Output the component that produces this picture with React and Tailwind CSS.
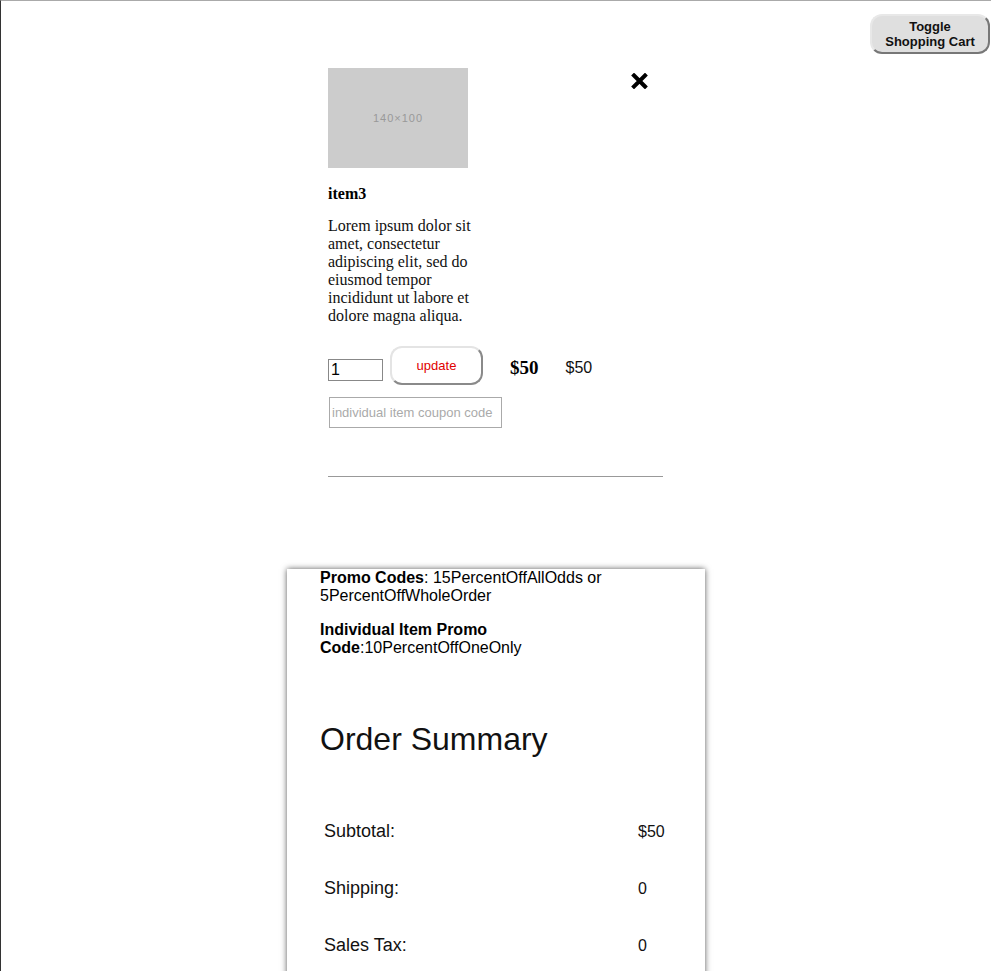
const summaryRows = [
  { label: "Subtotal:", value: "$50" },
  { label: "Shipping:", value: "0" },
  { label: "Sales Tax:", value: "0" },
  { label: "Total:", value: "$50" },
];

function CloseIcon() {
  return (
    <svg width="17" height="16" viewBox="0 0 17 16" aria-hidden="true">
      <path d="M3 2.5 L14 13.5 M14 2.5 L3 13.5" stroke="#000" strokeWidth="4" strokeLinecap="square" />
    </svg>
  );
}

function CartItem() {
  return (
    <div className="mx-auto w-[336px] pr-[1px] pt-[67px]">
      <div className="flex items-start">
        <div className="flex h-[100px] w-[140px] items-center justify-center bg-[#cccccc] font-['Liberation_Sans',sans-serif] text-[11px] tracking-[1px] text-[#999]">
          140×100
        </div>
        <div className="ml-auto mr-[15px] mt-[5px]">
          <CloseIcon />
        </div>
      </div>
      <h4 className="mt-[17px] font-['Liberation_Serif',serif] text-[16px] font-bold leading-[18px] text-black">item3</h4>
      <p className="mt-[14px] w-[152px] font-['Liberation_Serif',serif] text-[16px] leading-[18px] text-[#111]">
        Lorem ipsum dolor sit amet, consectetur adipiscing elit, sed do eiusmod tempor incididunt ut labore et dolore magna aliqua.
      </p>
      <div className="mt-[21px] flex items-start">
        <input
          type="text"
          defaultValue="1"
          className="mt-[13px] h-[22px] w-[55px] border border-[#888] px-[2px] font-['Liberation_Sans',sans-serif] text-[16px] leading-[20px] text-black outline-none"
        />
        <button
          type="button"
          className="ml-[7px] h-[39px] w-[93px] rounded-[12px] border-2 border-t-[#e4e4e4] border-l-[#e4e4e4] border-r-[#8a8a8a] border-b-[#8a8a8a] bg-white font-['Liberation_Sans',sans-serif] text-[13px] text-[#e00000]"
        >
          update
        </button>
        <span className="ml-[27px] mt-[11px] font-['Liberation_Serif',serif] text-[19px] font-bold leading-[22px]">$50</span>
        <span className="ml-[27px] mt-[12px] font-['Liberation_Sans',sans-serif] text-[16px] leading-[20px] text-[#111]">$50</span>
      </div>
      <input
        type="text"
        placeholder="individual item coupon code"
        className="ml-[1px] mt-[12px] block h-[31px] w-[173px] border border-[#aaa] px-[2px] font-['Liberation_Sans',sans-serif] text-[13px] text-black outline-none placeholder:text-[#aaa]"
      />
      <hr className="mt-[48px] border-t border-[#999]" />
    </div>
  );
}

function Summary() {
  return (
    <div className="mx-auto mt-[92px] w-[418px] bg-white pb-[40px] pl-[33px] font-['Liberation_Sans',sans-serif] text-black shadow-[0_0_6px_rgba(0,0,0,0.65)]">
      <p className="w-[340px] text-[16px] leading-[18px]">
        <strong>Promo Codes</strong>: 15PercentOffAllOdds or 5PercentOffWholeOrder
      </p>
      <p className="mt-[16px] w-[200px] text-[16px] leading-[18px]">
        <strong>Individual Item Promo Code</strong>:10PercentOffOneOnly
      </p>
      <h1 className="mt-[64px] text-[32px] leading-[37px] text-[#111]">Order Summary</h1>
      <div className="mt-[45px]">
        {summaryRows.map((row) => (
          <div key={row.label} className="flex h-[57px] items-center pl-[4px]">
            <span className="w-[314px] text-[18px] text-[#111]">{row.label}</span>
            <span className="text-[16px] text-[#111]">{row.value}</span>
          </div>
        ))}
      </div>
    </div>
  );
}

export default function App() {
  return (
    <div className="relative min-h-[971px] overflow-hidden border-l border-t border-l-[#333] border-t-[#aaa] bg-white">
      <button
        type="button"
        className="absolute right-[1px] top-[13px] h-[40px] w-[120px] rounded-[12px] border-2 border-t-[#e8e8e8] border-l-[#e8e8e8] border-r-[#777] border-b-[#777] bg-[#dfdfdf] font-['Liberation_Sans',sans-serif] text-[13px] font-bold leading-[15px] text-[#111]"
      >
        Toggle
        <br />
        Shopping Cart
      </button>
      <CartItem />
      <Summary />
    </div>
  );
}
